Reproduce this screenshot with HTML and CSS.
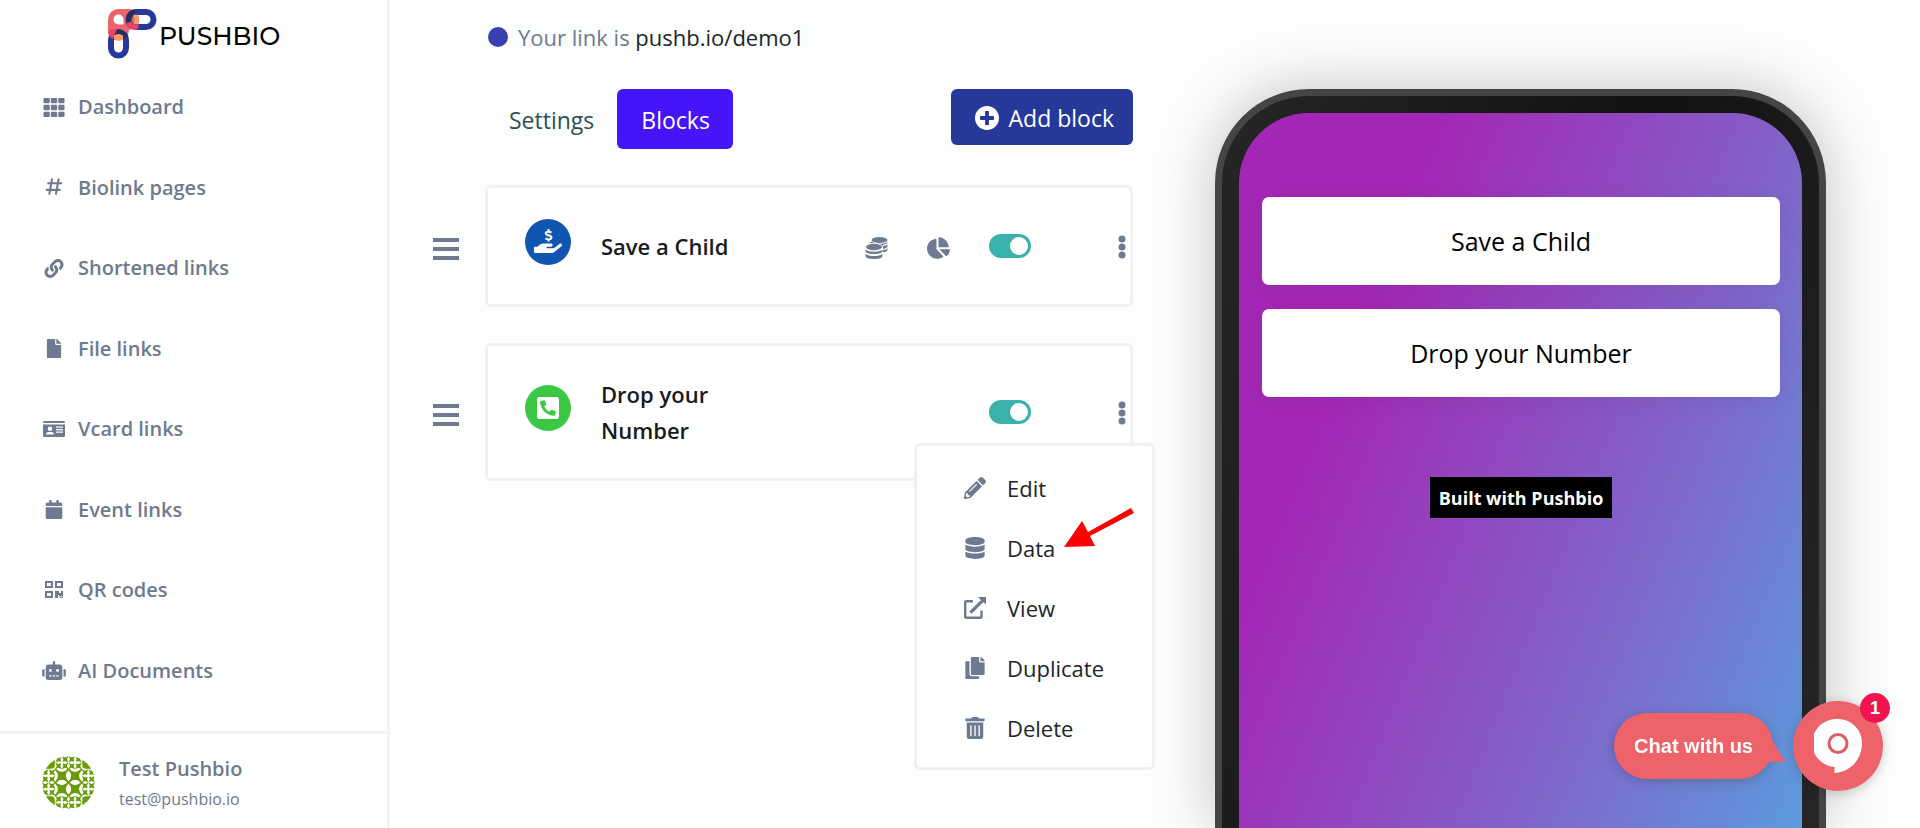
FILE: index.html
```html
<!DOCTYPE html>
<html lang="en">
<head>
<meta charset="utf-8">
<title>Pushbio - Blocks</title>
<meta name="viewport" content="width=device-width, initial-scale=1">
<link rel="stylesheet" href="styles.css">
</head>
<body>
<div class="app">
  <aside class="sidebar">
    <a class="logo" href="#" aria-label="Pushbio">
      <svg class="logo-mark" viewBox="0 0 50 50" aria-hidden="true">
        <path d="M10.500 0H20.500A10.500 10.500 0 0 1 20.500 21H21V21A10.500 10.500 0 0 1 0 21V10.500A10.500 10.500 0 0 1 10.500 0Z" fill="#ee6269"/>
        <rect x="20.500" y="3" width="25" height="15" rx="7.500" fill="none" stroke="#27389b" stroke-width="6"/>
        <rect x="3" y="23.500" width="15" height="23" rx="7.500" fill="none" stroke="#27389b" stroke-width="6"/>
        <path d="M10.500 5.500A5 5 0 0 1 15.500 10.500V15.500H10.500A5 5 0 0 1 10.500 5.500Z" fill="#fff"/>
        <path d="M27 3.200A7.500 7.500 0 0 0 21 13" fill="none" stroke="#22305f" stroke-width="5.500"/>
        <path d="M18.500 14A10.500 10.500 0 0 0 28.500 21Q31 18 31 15.500H27Q24.500 15 23.500 12.500Z" fill="#ea4462"/>
        <path d="M25 5.800H30Q32 10.500 30 15.200H25.500Q27.500 10.500 25 5.800Z" fill="#f79b6b"/>
        <path d="M8 23.500A7.500 7.500 0 0 1 17.500 28" fill="none" stroke="#22305f" stroke-width="5.500"/>
        <path d="M0 24Q1 20.500 6 20L9 21Q6.500 24 6 28L4.500 30Q1 27 0 24Z" fill="#ea4462"/>
        <path d="M6 26.500Q10.500 23.500 15 26.500V30.500Q10.500 32.500 6 30.500Z" fill="#f79b6b"/>
      </svg>
      <span>PUSHBIO</span>
    </a>
    <nav class="nav">
      <a href="#"><svg class="ico" viewBox="0 0 20 18"><g><rect width="6" height="5" rx="1"/><rect x="7" width="6" height="5" rx="1"/><rect x="14" width="6" height="5" rx="1"/><rect y="6.500" width="6" height="5" rx="1"/><rect x="7" y="6.500" width="6" height="5" rx="1"/><rect x="14" y="6.500" width="6" height="5" rx="1"/><rect y="13" width="6" height="5" rx="1"/><rect x="7" y="13" width="6" height="5" rx="1"/><rect x="14" y="13" width="6" height="5" rx="1"/></g></svg>Dashboard</a>
      <a href="#"><svg class="ico" viewBox="0 0 20 20"><path d="M8 .5 5 17.500M15 .5l-3 17M3 5.500h15.500M1.500 12.500H17" fill="none" stroke="currentColor" stroke-width="2.200"/></svg>Biolink pages</a>
      <a href="#"><svg class="ico" viewBox="0 0 512 512"><path d="M326.612 185.391c59.747 59.809 58.927 155.698.36 214.59-.11.12-.24.25-.36.37l-67.2 67.2c-59.27 59.27-155.699 59.262-214.96 0-59.27-59.26-59.27-155.7 0-214.96l37.106-37.106c9.84-9.84 26.786-3.3 27.294 10.606.648 17.722 3.826 35.527 9.69 52.721 1.986 5.822.567 12.262-3.783 16.612l-13.087 13.087c-28.026 28.026-28.905 73.66-1.155 101.96 28.024 28.579 74.086 28.749 102.325.51l67.2-67.19c28.191-28.191 28.073-73.757 0-101.83-3.701-3.694-7.429-6.564-10.341-8.569a16.037 16.037 0 0 1-6.947-12.606c-.396-10.567 3.348-21.456 11.698-29.806l21.054-21.055c5.521-5.521 14.182-6.199 20.584-1.731a152.482 152.482 0 0 1 20.522 17.197zM467.547 44.449c-59.261-59.262-155.69-59.27-214.96 0l-67.2 67.2c-.12.12-.25.25-.36.37-58.566 58.892-59.387 154.781.36 214.59a152.454 152.454 0 0 0 20.521 17.196c6.402 4.468 15.064 3.789 20.584-1.731l21.054-21.055c8.35-8.35 12.094-19.239 11.698-29.806a16.037 16.037 0 0 0-6.947-12.606c-2.912-2.005-6.64-4.875-10.341-8.569-28.073-28.073-28.191-73.639 0-101.83l67.2-67.19c28.239-28.239 74.3-28.069 102.325.51 27.75 28.3 26.872 73.934-1.155 101.96l-13.087 13.087c-4.35 4.35-5.769 10.79-3.783 16.612 5.864 17.194 9.042 34.999 9.69 52.721.509 13.906 17.454 20.446 27.294 10.606l37.106-37.106c59.271-59.259 59.271-155.699.001-214.959z"/></svg>Shortened links</a>
      <a href="#"><svg class="ico" viewBox="0 0 384 512"><path d="M224 136V0H24C10.700 0 0 10.700 0 24v464c0 13.300 10.700 24 24 24h336c13.300 0 24-10.700 24-24V160H248c-13.200 0-24-10.800-24-24zm160-14.100v6.100H256V0h6.100c6.400 0 12.500 2.500 17 7l97.900 98c4.500 4.500 7 10.600 7 16.900z"/></svg>File links</a>
      <a href="#"><svg class="ico" viewBox="0 0 24 19"><path fill-rule="evenodd" transform="translate(1 1)" d="M1.500 0h19A1.500 1.500 0 0 1 22 1.500V2H0v-.5A1.500 1.500 0 0 1 1.500 0zM0 3.500h22v11a1.500 1.500 0 0 1-1.500 1.500h-19A1.500 1.500 0 0 1 0 14.500zM3 13.500h8c0-1.600-1-2.500-2.500-2.500h-3C4 11 3 12 3 13.500zM7 5.500a2.300 2.300 0 1 0 0 4.600 2.300 2.300 0 0 0 0-4.600zM13 5.500v1.200h7V5.500zM13 8v1.200h7V8zM13 10.500v1.200h7v-1.200z"/></svg>Vcard links</a>
      <a href="#"><svg class="ico" viewBox="0 0 448 512"><path d="M12 192h424c6.600 0 12 5.400 12 12v260c0 26.500-21.500 48-48 48H48c-26.500 0-48-21.500-48-48V204c0-6.600 5.400-12 12-12zm436-44v-36c0-26.500-21.500-48-48-48h-48V12c0-6.600-5.400-12-12-12h-40c-6.600 0-12 5.400-12 12v52H160V12c0-6.600-5.400-12-12-12h-40c-6.600 0-12 5.400-12 12v52H48C21.500 64 0 85.500 0 112v36c0 6.600 5.400 12 12 12h424c6.600 0 12-5.400 12-12z"/></svg>Event links</a>
      <a href="#"><svg class="ico" viewBox="0 0 18 19"><path fill-rule="evenodd" d="M0 0h8v7H0zM2 2v3h4V2zM10 0h8v7h-8zM12 2v3h4V2zM0 10h8v7H0zM2 12v3h4v-3zM10 10h4v2h2v-2h2v5h-4v-1h-1v3h-3zM14.500 15.500H16V17h-1.500zM16.500 15.500H18V17h-1.500z"/></svg>QR codes</a>
      <a href="#"><svg class="ico" viewBox="0 0 640 512"><path d="M32 224h32v192H32a31.960 31.960 0 0 1-32-32V256a31.960 31.960 0 0 1 32-32zm512-48v272a64.060 64.060 0 0 1-64 64H160a64.060 64.060 0 0 1-64-64V176a79.974 79.974 0 0 1 80-80h112V32a32 32 0 0 1 64 0v64h112a79.974 79.974 0 0 1 80 80zm-280 80a40 40 0 1 0-40 40 39.997 39.997 0 0 0 40-40zm-8 128h-64v32h64zm96 0h-64v32h64zm104-128a40 40 0 1 0-40 40 39.997 39.997 0 0 0 40-40zm-8 128h-64v32h64zm192-128v128a31.960 31.960 0 0 1-32 32h-32V224h32a31.960 31.960 0 0 1 32 32z"/></svg>AI Documents</a>
    </nav>
    <a class="user" href="#">
      <svg class="avatar" viewBox="0 0 52 52" aria-hidden="true">
        <defs>
          <clipPath id="round"><circle cx="26" cy="26" r="26"/></clipPath>
          <path id="tile" d="M0 0Q6.500 7 13 0Q6 6.500 13 13Q6.500 6 0 13Q7 6.500 0 0Z" stroke="#699c08" stroke-width="1.600" stroke-linejoin="round"/>
          <g id="minis"><path d="M0 0L3.200 1.500 6.500 0 5 3.200 6.500 6.500 3.200 5 0 6.500 1.500 3.200ZM6.500 0L9.700 1.500 13 0 11.500 3.200 13 6.500 9.700 5 6.500 6.500 8 3.200ZM0 6.500L3.200 8 6.500 6.500 5 9.700 6.500 13 3.200 11.500 0 13 1.500 9.700ZM6.500 6.500L9.700 8 13 6.500 11.500 9.700 13 13 9.700 11.500 6.500 13 8 9.700Z"/><circle cx="6.500" cy="6.500" r="1.800" fill="#fff"/></g>
        </defs>
        <g clip-path="url(#round)" fill="#699c08">
          <use href="#tile" x="13" y="13"/><use href="#tile" x="26" y="13"/><use href="#tile" x="13" y="26"/><use href="#tile" x="26" y="26"/>
          <use href="#minis" x="13"/><use href="#minis" x="26"/><use href="#minis" x="13" y="39"/><use href="#minis" x="26" y="39"/>
          <use href="#minis" y="13"/><use href="#minis" y="26"/><use href="#minis" x="39" y="13"/><use href="#minis" x="39" y="26"/>
          <path d="M0 12.500V0h12.500v9q0 3.500-3.500 3.500zM52 12.500V0H39.500v9q0 3.500 3.500 3.500zM0 39.500V52h12.500v-9q0-3.500-3.500-3.500zM52 39.500V52H39.500v-9q0-3.500 3.500-3.500z"/>
        </g>
      </svg>
      <span class="user-text"><span class="user-name">Test Pushbio</span><span class="user-mail">test@pushbio.io</span></span>
    </a>
  </aside>

  <main class="main">
    <section class="editor">
      <p class="link-line"><span class="dot"></span><span>Your link is <a href="#">pushb.io/demo1</a></span></p>
      <div class="toolbar">
        <div class="tabs">
          <button class="tab" type="button">Settings</button>
          <button class="tab tab-active" type="button">Blocks</button>
        </div>
        <button class="add" type="button"><svg viewBox="8 8 496 496" aria-hidden="true"><path d="M256 8C119 8 8 119 8 256s111 248 248 248 248-111 248-248S393 8 256 8zm144 276c0 6.600-5.400 12-12 12h-92v92c0 6.600-5.400 12-12 12h-56c-6.600 0-12-5.400-12-12v-92h-92c-6.600 0-12-5.400-12-12v-56c0-6.600 5.400-12 12-12h92v-92c0-6.600 5.400-12 12-12h56c6.600 0 12 5.400 12 12v92h92c6.600 0 12 5.400 12 12v56z"/></svg>Add block</button>
      </div>

      <div class="block">
        <button class="handle" type="button" aria-label="Reorder Save a Child"><svg viewBox="0 0 26 22"><path d="M0 2h26M0 11h26M0 20h26"/></svg></button>
        <article class="card">
          <span class="badge badge-blue"><svg viewBox="0 0 28 26" aria-hidden="true"><path transform="translate(0 -1) scale(.0486)" d="M565.300 328.100c-11.800-10.700-30.200-10-42.600 0L430.300 402c-11.300 9.100-25.400 14-40 14H272c-8.800 0-16-7.200-16-16s7.200-16 16-16h78.300c15.900 0 30.700-10.900 33.300-26.600 3.300-20-12.100-37.400-31.600-37.400H192c-27 0-53.100 9.300-74.100 26.300L71.400 384H16c-8.800 0-16 7.200-16 16v96c0 8.800 7.200 16 16 16h356.800c14.500 0 28.600-4.900 40-14L564 377c15.200-12.100 16.400-35.300 1.300-48.900z"/><path d="M17.500 3.500Q14.500 2 12.500 3.200T13.500 6L16 6.800Q18.500 8 17 9.700T11.500 9.500M14.500 0v3M14.500 10v2.500" fill="none" stroke="#fff" stroke-width="2"/></svg></span>
          <h2 class="title">Save a Child</h2>
          <div class="actions">
            <button class="icon-btn" type="button" aria-label="Donations"><svg viewBox="0 0 22 22"><ellipse cx="14" cy="3" rx="8" ry="3"/><path d="M6 4.500v.5q-2 .3-3 1L16 6.800q4.500-.3 6-2.300V5q0 2.200-5 3 .5.600.5 1.200Q22 8.500 22 6.500V9q0 2-4.500 3v-1.800M17.500 13Q22 12.500 22 10.500V12.500q0 2.200-4.500 3z"/><ellipse cx="8.500" cy="10" rx="9" ry="4" fill="#fff"/><ellipse cx="8.500" cy="10" rx="8" ry="3.200"/><path d="M0 12.500q2.500 2.200 8.500 2.200T17 12.500V14q0 3-8.500 3T0 14zM0 16.800Q2.500 19 8.500 19T17 16.800V19q0 3-8.500 3T0 19z"/></svg></button>
            <button class="icon-btn" type="button" aria-label="Statistics"><svg viewBox="0 0 544 512"><path d="M527.790 288H290.500l158.030 158.030c6.040 6.040 15.980 6.530 22.190.68 38.700-36.460 65.320-85.610 73.130-140.860 1.340-9.460-6.510-17.850-16.060-17.850zm-15.830-64.800C503.720 103.740 408.260 8.280 288.800.04 279.680-.59 272 7.100 272 16.240V240h223.770c9.140 0 16.820-7.680 16.190-16.800zM224 288V50.710c0-9.550-8.390-17.400-17.840-16.060C86.990 51.490-4.100 155.600.14 280.370 4.500 408.510 114.830 513.590 243.030 511.980c50.400-.63 96.970-16.870 135.260-44.030 7.900-5.600 8.420-17.230 1.570-24.080L224 288z"/></svg></button>
            <input class="switch" type="checkbox" checked aria-label="Save a Child enabled">
            <button class="dots" type="button" aria-label="More"><svg viewBox="0 0 8 24"><circle cx="4" cy="4" r="3.500"/><circle cx="4" cy="12" r="3.500"/><circle cx="4" cy="20" r="3.500"/></svg></button>
          </div>
        </article>
      </div>

      <div class="block">
        <button class="handle" type="button" aria-label="Reorder Drop your Number"><svg viewBox="0 0 26 22"><path d="M0 2h26M0 11h26M0 20h26"/></svg></button>
        <article class="card">
          <span class="badge badge-green"><svg viewBox="0 32 448 448" aria-hidden="true"><path d="M400 32H48A48 48 0 0 0 0 80v352a48 48 0 0 0 48 48h352a48 48 0 0 0 48-48V80a48 48 0 0 0-48-48zm-16.390 307.370l-15 65A15 15 0 0 1 354 416C194 416 64 286.290 64 126a15.700 15.700 0 0 1 11.630-14.610l65-15A18.230 18.230 0 0 1 144 96a16.270 16.270 0 0 1 13.790 9.090l30 70A17.900 17.900 0 0 1 189 181a17 17 0 0 1-5.500 11.610l-37.890 31a231.910 231.910 0 0 0 110.780 110.780l31-37.890A17 17 0 0 1 299 291a17.850 17.850 0 0 1 5.910 1.210l70 30A16.250 16.250 0 0 1 384 336a17.410 17.410 0 0 1-.39 3.370z"/></svg></span>
          <h2 class="title">Drop your Number</h2>
          <div class="actions">
            <input class="switch" type="checkbox" checked aria-label="Drop your Number enabled">
            <button class="dots" type="button" aria-label="More" aria-expanded="true"><svg viewBox="0 0 8 24"><circle cx="4" cy="4" r="3.500"/><circle cx="4" cy="12" r="3.500"/><circle cx="4" cy="20" r="3.500"/></svg></button>
          </div>
          <div class="menu">
            <a href="#"><svg class="ico" viewBox="0 0 512 512"><path d="M497.900 142.100l-46.100 46.100c-4.700 4.700-12.300 4.700-17 0l-111-111c-4.700-4.700-4.700-12.300 0-17l46.100-46.100c18.700-18.700 49.100-18.700 67.900 0l60.100 60.100c18.800 18.700 18.800 49.100 0 67.900zM284.200 99.800L21.600 362.400.4 483.900c-2.900 16.400 11.400 30.600 27.800 27.800l121.500-21.300 262.600-262.600c4.700-4.700 4.700-12.300 0-17l-111-111c-4.800-4.700-12.400-4.700-17.100 0zM124.100 339.900c-5.500-5.500-5.500-14.300 0-19.800l154-154c5.500-5.500 14.300-5.500 19.800 0s5.500 14.300 0 19.800l-154 154c-5.500 5.500-14.300 5.500-19.800 0zM88 424h48v36.300l-64.500 11.300-31.100-31.100L51.700 376H88v48z"/></svg>Edit</a>
            <a href="#"><svg class="ico" viewBox="0 0 448 512"><path d="M448 73.143v45.714C448 159.143 347.667 192 224 192S0 159.143 0 118.857V73.143C0 32.857 100.333 0 224 0s224 32.857 224 73.143zM448 176v102.857C448 319.143 347.667 352 224 352S0 319.143 0 278.857V176c48.125 33.143 136.208 48.572 224 48.572S399.874 209.143 448 176zm0 160v102.857C448 479.143 347.667 512 224 512S0 479.143 0 438.857V336c48.125 33.143 136.208 48.572 224 48.572S399.874 369.143 448 336z"/></svg>Data
              <svg class="arrow" viewBox="0 0 70 39" aria-hidden="true"><path d="M67 0l3 5-44 23 5 10-31 1L18 13l6 11z"/></svg></a>
            <a href="#"><svg class="ico" viewBox="0 0 22 22"><path d="M9 4.200H2.200Q1.200 4.200 1.200 5.200V20Q1.200 20.800 2.200 20.800H16.500Q17.500 20.800 17.500 20V13.500" fill="none" stroke="currentColor" stroke-width="2.400"/><path d="M14 0h8v7.500l-2.700-2.200L7.500 16.800 5.300 14.600 17 2.900z"/></svg>View</a>
            <a href="#"><svg class="ico" viewBox="0 0 448 512"><path d="M320 448v40c0 13.255-10.745 24-24 24H24c-13.255 0-24-10.745-24-24V120c0-13.255 10.745-24 24-24h72v296c0 30.879 25.121 56 56 56h168zm0-344V0H152c-13.255 0-24 10.745-24 24v368c0 13.255 10.745 24 24 24h272c13.255 0 24-10.745 24-24V128H344c-13.200 0-24-10.800-24-24zm120.971-31.029L375.029 7.029A24 24 0 0 0 358.059 0H352v96h96v-6.059a24 24 0 0 0-7.029-16.970z"/></svg>Duplicate</a>
            <a href="#"><svg class="ico" viewBox="0 0 448 512"><path d="M32 464a48 48 0 0 0 48 48h288a48 48 0 0 0 48-48V128H32zm272-256a16 16 0 0 1 32 0v224a16 16 0 0 1-32 0zm-96 0a16 16 0 0 1 32 0v224a16 16 0 0 1-32 0zm-96 0a16 16 0 0 1 32 0v224a16 16 0 0 1-32 0zM432 32H312l-9.400-18.700A24 24 0 0 0 281.100 0H166.800a23.720 23.720 0 0 0-21.400 13.300L136 32H16A16 16 0 0 0 0 48v32a16 16 0 0 0 16 16h416a16 16 0 0 0 16-16V48a16 16 0 0 0-16-16z"/></svg>Delete</a>
          </div>
        </article>
      </div>
    </section>

    <section class="phone" aria-label="Preview">
      <div class="screen">
        <a class="bio-link" href="#">Save a Child</a>
        <a class="bio-link" href="#">Drop your Number</a>
        <a class="built" href="#">Built with Pushbio</a>
      </div>
    </section>
  </main>

  <div class="chat">
    <button class="chat-bubble" type="button">Chat with us<svg class="chat-tail" viewBox="0 0 16 24" aria-hidden="true"><path d="M2 0 16 24H0V0z"/></svg></button>
    <button class="chat-round" type="button" aria-label="Open chat, 1 unread">
      <svg viewBox="0 0 48 54" aria-hidden="true"><path d="M24 0a24 24 0 0 1 24 24c0 16-11 29-27.500 30v-6A24 24 0 0 1 24 0z" fill="#fff"/><circle cx="24" cy="24.500" r="9" fill="none" stroke="#dc5f63" stroke-width="3"/></svg>
      <span class="chat-count">1</span>
    </button>
  </div>
</div>
</body>
</html>
```
FILE: styles.css
```css
* { box-sizing: border-box; }

body {
  margin: 0;
  background: #fcfefd;
  color: #212529;
  font: 22px/36px "Segoe UI", "Open Sans", "Noto Sans", sans-serif;
}

a { color: inherit; text-decoration: none; }

button {
  border: 0;
  padding: 0;
  background: none;
  color: inherit;
  font: inherit;
  cursor: pointer;
}

svg { display: block; fill: currentColor; }

.app { display: flex; height: 100vh; overflow: hidden; }

/* Sidebar */
.sidebar {
  display: flex;
  flex-direction: column;
  flex: none;
  width: 390px;
  background: #fff;
  border-right: 3px solid #f0f1f3;
  color: #6e7a8f;
}

.logo {
  display: flex;
  align-items: center;
  gap: 1px;
  height: 67px;
  padding-left: 108px;
  color: #000;
  font: 500 25px/32px Montserrat, Inter, sans-serif;
}
.logo-mark { width: 50px; height: 50px; }
.logo span { padding-top: 4px; }

.nav { display: flex; flex-direction: column; flex: 1; padding-bottom: 20px; }
.nav a {
  display: flex;
  align-items: center;
  flex: 1;
  gap: 12px;
  padding-left: 42px;
  font-size: 20px;
  font-weight: 600;
}
.ico { flex: none; width: 24px; height: 19px; }

.user {
  display: flex;
  align-items: center;
  gap: 24px;
  padding: 18px 42px 16px;
  border-top: 3px solid #f0f1f3;
}
.avatar { width: 53px; height: 53px; }
.user-text { display: flex; flex-direction: column; }
.user-name { font-size: 20px; font-weight: 600; line-height: 34px; }
.user-mail { font-size: 16px; line-height: 26px; }

/* Main area */
.main {
  display: grid;
  grid-template-columns: 700fr 611fr;
  gap: 82px;
  flex: 1;
  padding: 0 94px 0 43px;
}

.editor { min-width: 0; }

.link-line {
  display: flex;
  align-items: center;
  gap: 10px;
  margin: 19px 0 34px 55px;
  color: #6e7a8f;
}
.link-line a { color: #212529; }
.dot { width: 20px; height: 20px; border-radius: 50%; background: #3a3fb2; }

.toolbar {
  display: flex;
  justify-content: space-between;
  align-items: flex-start;
  margin: 0 0 36px 52px;
  font-size: 23px;
}
.tabs { display: flex; }
.tab { height: 60px; padding: 2px 23px 0 24px; border-radius: 6px; color: #2f4f55; }
.tab-active { background: #4614f8; color: #fff; }
.add {
  display: flex;
  align-items: center;
  gap: 10px;
  height: 56px;
  padding: 2px 19px 0 24px;
  border-radius: 6px;
  background: #27389b;
  color: #fff;
}
.add svg { width: 24px; height: 24px; }

.block { display: flex; align-items: center; gap: 26px; margin-bottom: 36px; }
.handle { flex: none; width: 26px; padding-top: 6px; color: #6e7a8f; }
.handle svg { width: 26px; height: 22px; stroke: currentColor; stroke-width: 4; }

.card {
  position: relative;
  display: flex;
  align-items: center;
  flex: 1;
  min-height: 122px;
  padding: 30px 2px 30px 37px;
  background: #fff;
  border: 3px solid #f0f1f3;
  border-radius: 6px;
}
.badge {
  display: grid;
  place-items: center;
  flex: none;
  width: 46px;
  height: 46px;
  margin: 0 30px 8px 0;
  border-radius: 50%;
  color: #fff;
}
.badge-blue { background: #0f56b0; }
.badge-green { background: #3ac744; }
.badge-blue svg { width: 28px; height: 26px; }
.badge-green svg { width: 22px; height: 22px; }
.title { width: 150px; margin: 0; color: #181a1d; font-size: 22px; font-weight: 600; line-height: 36px; }

.actions { display: flex; align-items: center; margin-left: auto; color: #6e7a8f; }
.icon-btn { margin-right: 39px; padding-top: 4px; }
.icon-btn svg { width: 23px; height: 22px; }
.switch {
  appearance: none;
  display: flex;
  justify-content: flex-end;
  width: 42px;
  height: 24px;
  margin: 0 87px 0 0;
  padding: 3px;
  border-radius: 12px;
  background: #3ab2ac;
}
.switch::before { content: ""; width: 18px; height: 18px; border-radius: 50%; background: #fff; }
.switch:not(:checked) { justify-content: flex-start; background: #c5cbd3; }
.dots { width: 10px; padding-top: 2px; }
.dots svg { width: 8px; height: 24px; }

/* Block menu */
.menu {
  position: absolute;
  z-index: 2;
  top: 97px;
  right: -25px;
  width: 241px;
  padding: 12px 0 9px;
  background: #fff;
  border: 3px solid #f0f1f3;
  border-radius: 6px;
}
.menu a {
  position: relative;
  display: flex;
  align-items: center;
  gap: 20px;
  height: 60px;
  padding-left: 46px;
}
.menu .ico { height: 22px; color: #6e7a8f; }
.menu .arrow { position: absolute; top: -10px; left: 147px; width: 70px; height: 39px; fill: #fd0100; }

/* Phone preview */
.phone {
  margin-top: 89px;
  padding: 17px 17px 0;
  border: 7px solid #444547;
  border-bottom: 0;
  border-radius: 94px 94px 0 0;
  background: linear-gradient(105deg, #262626, #111 55%, #262626);
  box-shadow: 0 0 60px rgba(0, 0, 0, .24);
}
.screen {
  display: flex;
  flex-direction: column;
  align-items: center;
  gap: 24px;
  height: 100%;
  padding: 84px 22px 0 23px;
  border-radius: 70px 70px 0 0;
  background: linear-gradient(112deg, #a327b5 24%, #8066ca 68%, #5c9bdc);
}
.bio-link {
  width: 100%;
  padding: 26px;
  border-radius: 7px;
  background: #fff;
  box-shadow: 0 4px 24px rgba(0, 0, 0, .06);
  color: #000;
  font-size: 25px;
  text-align: center;
}
.built {
  margin-top: 56px;
  padding: 5px 9px 3px;
  background: #000;
  color: #fff;
  font-size: 18px;
  font-weight: 700;
  line-height: 33px;
}

/* Chat widget */
.chat {
  position: fixed;
  right: 37px;
  bottom: 37px;
  display: flex;
  align-items: center;
  gap: 20px;
  font-family: "Liberation Sans", sans-serif;
  font-weight: 700;
}
.chat-bubble {
  position: relative;
  height: 66px;
  padding: 0 20px;
  border-radius: 33px;
  background: #ed6369;
  box-shadow: 0 2px 12px rgba(0, 0, 0, .2);
  color: #fff;
  font-size: 20px;
}
.chat-tail { position: absolute; right: -12px; bottom: 17px; width: 16px; height: 24px; fill: #ed6369; }
.chat-round {
  position: relative;
  display: grid;
  place-items: center;
  width: 90px;
  height: 90px;
  border-radius: 50%;
  background: #ed6369;
  box-shadow: 0 2px 12px rgba(0, 0, 0, .2);
}
.chat-round svg { width: 48px; height: 54px; }
.chat-count {
  position: absolute;
  top: -8px;
  right: -7px;
  width: 30px;
  height: 30px;
  border-radius: 50%;
  background: #f0154f;
  color: #fff;
  font-size: 18px;
  line-height: 31px;
}
```
